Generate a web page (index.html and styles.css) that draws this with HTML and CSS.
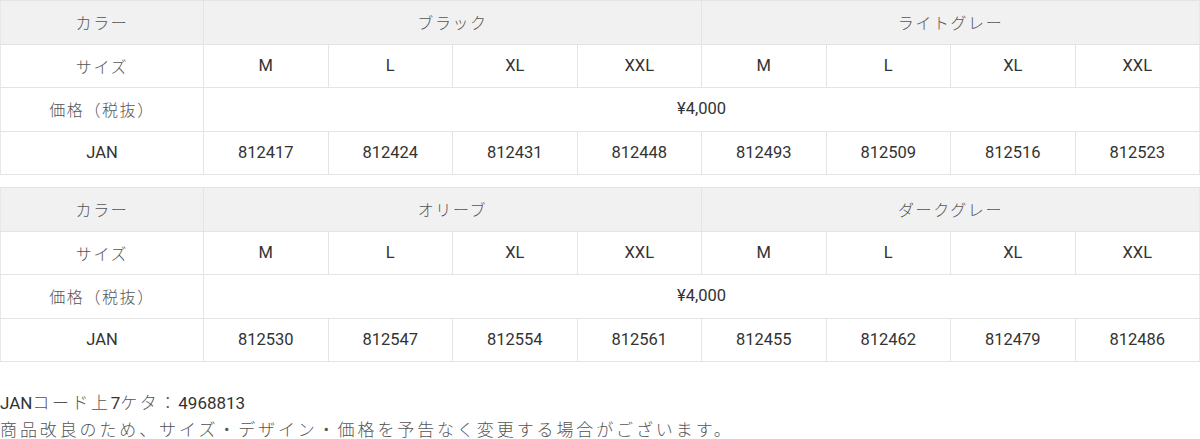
FILE: index.html
```html
<!DOCTYPE html>
<html lang="ja">
<head>
<meta charset="utf-8">
<link rel="stylesheet" href="styles.css">
</head>
<body>
<div class="page">
  <table class="spec">
    <colgroup><col class="c-label"><col><col><col><col><col><col><col><col></colgroup>
    <tr class="head"><td class="jp">カラー</td><td class="jp" colspan="4">ブラック</td><td class="jp" colspan="4">ライトグレー</td></tr>
    <tr><td class="jp">サイズ</td><td>M</td><td>L</td><td>XL</td><td>XXL</td><td>M</td><td>L</td><td>XL</td><td>XXL</td></tr>
    <tr><td class="jp">価格（税抜）</td><td colspan="8">¥4,000</td></tr>
    <tr><td>JAN</td><td>812417</td><td>812424</td><td>812431</td><td>812448</td><td>812493</td><td>812509</td><td>812516</td><td>812523</td></tr>
  </table>
  <table class="spec">
    <colgroup><col class="c-label"><col><col><col><col><col><col><col><col></colgroup>
    <tr class="head"><td class="jp">カラー</td><td class="jp" colspan="4">オリーブ</td><td class="jp" colspan="4">ダークグレー</td></tr>
    <tr><td class="jp">サイズ</td><td>M</td><td>L</td><td>XL</td><td>XXL</td><td>M</td><td>L</td><td>XL</td><td>XXL</td></tr>
    <tr><td class="jp">価格（税抜）</td><td colspan="8">¥4,000</td></tr>
    <tr><td>JAN</td><td>812530</td><td>812547</td><td>812554</td><td>812561</td><td>812455</td><td>812462</td><td>812479</td><td>812486</td></tr>
  </table>
  <div class="notes">
    <p class="note1">JAN<span class="jp">コード上</span>7<span class="jp">ケタ</span><span class="colon jp">：</span>4968813</p>
    <p class="note2 jp">商品改良のため、サイズ・デザイン・価格を予告なく変更する場合がございます。</p>
  </div>
</div>
</body>
</html>
```

FILE: styles.css
```css
html, body {
  margin: 0;
  padding: 0;
  background: #fff;
}
body {
  font-family: Roboto, "Noto Sans CJK JP", sans-serif;
  color: #333;
}
.page {
  width: 1200px;
}
.spec {
  width: 1200px;
  border-collapse: collapse;
  table-layout: fixed;
  margin-bottom: 12px;
}
.c-label {
  width: 203px;
}
.spec td {
  border: 1px solid #e4e4e4;
  height: 42.5px;
  padding: 0;
  text-align: center;
  vertical-align: middle;
  font-size: 16.5px;
  line-height: 20px;
  color: #333;
}
.spec td:first-child { border-left: 1px solid #e8e8e8; }
.spec td:last-child { border-right: 1px solid #e8e8e8; }
.spec .head td {
  background: #f1f1f1;
}
.spec td.jp, .jp {
  font-family: "Noto Sans CJK JP", sans-serif;
  font-weight: 300;
  color: #555;
  letter-spacing: 0.1em;
  font-size: 16px;
}
.notes {
  margin-top: 27px;
}
.notes p {
  margin: 0;
  font-size: 17px;
  line-height: 26px;
}
.note1 {
  color: #333;
  font-family: Roboto, sans-serif;
}
.note1 .jp {
  font-size: 17px;
  letter-spacing: 0.15em;
}
.note1 .colon {
  padding: 0 2px 0 0;
  letter-spacing: 0;
}
.notes .note2 {
  font-size: 17px;
  letter-spacing: 0.17em;
}
```
